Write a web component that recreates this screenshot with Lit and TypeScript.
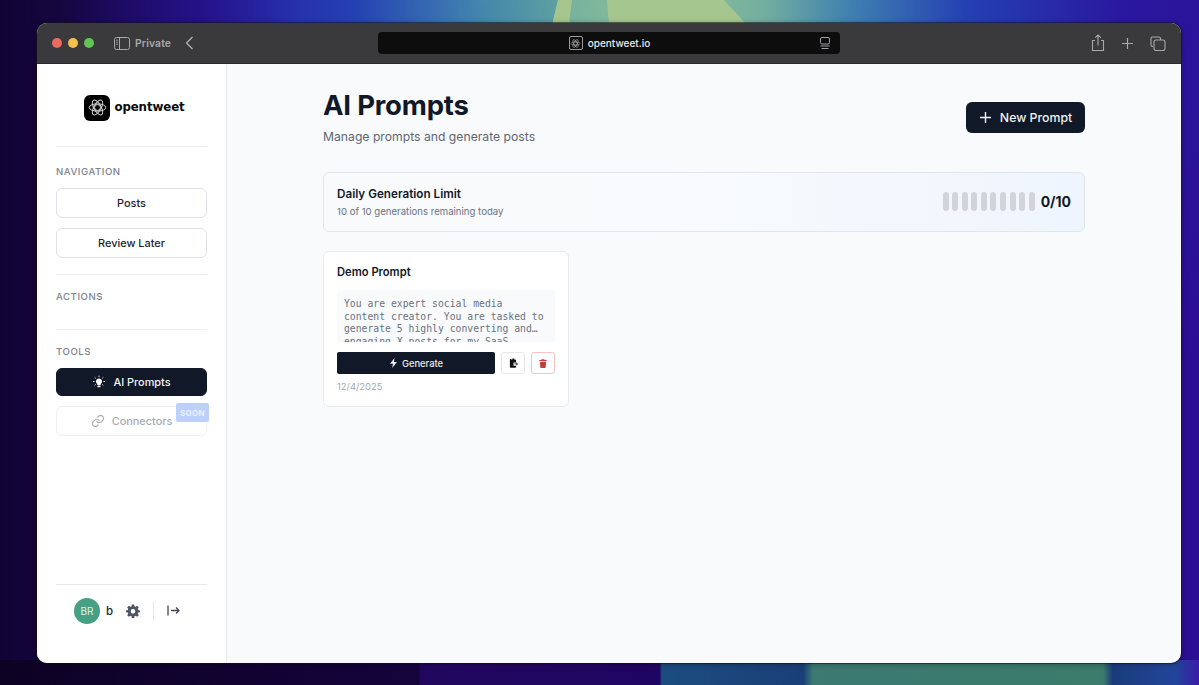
import { LitElement, html, css, svg } from "lit";
import { customElement } from "lit/decorators.js";

const atom = (stroke: string, w = 1) => svg`
  <g fill="none" stroke=${stroke} stroke-width=${w}>
    <ellipse cx="12" cy="12" rx="9.5" ry="4.2"/>
    <ellipse cx="12" cy="12" rx="9.5" ry="4.2" transform="rotate(60 12 12)"/>
    <ellipse cx="12" cy="12" rx="9.5" ry="4.2" transform="rotate(120 12 12)"/>
    <circle cx="12" cy="12" r="3.4"/>
  </g>`;

@customElement("app-root")
export class AppRoot extends LitElement {
  static styles = css`
    :host { display: block; position: relative; width: 1199px; height: 685px; overflow: hidden; background: #12032f; font-family: Inter, "Liberation Sans", sans-serif; box-sizing: border-box; padding: 23px 18px 22px 37px; }
    * { box-sizing: border-box; }
    .wall { position: absolute; inset: 0; width: 1199px; height: 685px; }
    .window { position: relative; height: 640px; border-radius: 10px; overflow: hidden; display: flex; flex-direction: column; background: #f9fafb; box-shadow: 0 0 0 1px rgba(20,20,30,.55), 0 1px 6px rgba(0,0,0,.35); }
    .titlebar { height: 41px; flex: none; background: #3a3a3d; border-bottom: 1px solid #2c2c2e; display: grid; grid-template-columns: 341px 462px 1fr; align-items: center; }
    .tl { display: flex; align-items: center; padding-left: 15px; }
    .dot { width: 10px; height: 10px; border-radius: 50%; margin-right: 6px; }
    .dot.g { margin-right: 20px; }
    .r { background: #ec6a5e; } .y { background: #f4bf4f; } .g { background: #61c554; }
    .private { color: #a7a8aa; font-size: 10.4px; font-weight: 600; margin: 0 14px 0 5px; letter-spacing: .1px; }
    .url { height: 22px; background: #0d0d0e; border-radius: 4px; display: flex; align-items: center; justify-content: center; position: relative; color: #e9e9ea; font-size: 10px; gap: 5px; font-weight: 500; padding-left: 1px; }
    .url .fav { width: 14px; height: 14px; border: 1px solid #9a9a9c; border-radius: 2px; display: flex; align-items: center; justify-content: center; }
    .url .rd { position: absolute; right: 9px; top: 5px; }
    .tools { display: flex; justify-content: flex-end; align-items: center; gap: 16px; padding-right: 15px; }
    .body { flex: 1; display: flex; min-height: 0; }
    .side { width: 190px; flex: none; background: #fff; border-right: 1px solid #e9ebee; padding: 0 19px; display: flex; flex-direction: column; }
    .logo { height: 83px; border-bottom: 1px solid #eceef1; display: flex; align-items: center; justify-content: center; gap: 4px; padding: 5px 0 0 6px; }
    .logo .mark { width: 26px; height: 26px; background: #000; border-radius: 6px; display: flex; align-items: center; justify-content: center; }
    .logo span { font-family: "DejaVu Sans", sans-serif; font-weight: 700; font-size: 11.8px; color: #0b0b0c; letter-spacing: -.1px; margin-top: -2px; }
    .sec { padding: 19px 0 16px; border-bottom: 1px solid #eceef1; display: flex; flex-direction: column; gap: 10px; }
    .sec.actions { padding: 16px 0 32px; }
    .sec.tools2 { border: 0; padding-top: 16px; }
    .label { font-size: 9.6px; line-height: 12px; font-weight: 500; letter-spacing: .55px; color: #7d828c; height: 6px; }
    .btn { height: 30px; border: 1px solid #dfe2e6; border-radius: 6px; background: #fff; color: #1d2430; font-size: 10.9px; font-weight: 500; display: flex; align-items: center; justify-content: center; gap: 7px; }
    .btn.dark { background: #111827; border-color: #111827; color: #f3f4f6; height: 28px; }
    .btn.off { color: #a9adb4; border-color: #eef0f2; position: relative; }
    .label + .btn { margin-top: 6px; }
    .soon { position: absolute; right: -3px; top: -4px; width: 33px; height: 19px; border-radius: 2px; background: #bcd0fa; color: #e9f0fe; font-size: 8px; font-weight: 700; letter-spacing: .3px; display: flex; align-items: center; justify-content: center; }
    .foot { margin-top: auto; height: 79px; border-top: 1px solid #e6e8eb; display: flex; align-items: flex-start; padding: 13px 0 0 18px; }
    .av { width: 26px; height: 26px; border-radius: 50%; background: #46a083; color: #dff1ea; font-size: 10px; display: flex; align-items: center; justify-content: center; }
    .b { font-size: 11.5px; font-weight: 500; color: #1d2430; margin-left: 6px; line-height: 26px; }
    .gear { margin: 6px 0 0 13px; }
    .vsep { width: 1px; height: 18px; background: #e3e5e8; margin: 4px 13px 0 13px; }
    .ex { margin-top: 6px; }
    .main { flex: 1; padding: 23px 96px 0; min-width: 0; }
    .head { display: flex; justify-content: space-between; align-items: flex-start; height: 85px; }
    h1 { margin: 0; font-size: 27.5px; line-height: 36px; font-weight: 700; color: #111827; letter-spacing: -.2px; }
    .head p { margin: 4px 0 0; font-size: 12.2px; line-height: 20px; color: #5f6672; }
    .new { margin-top: 15px; width: 119px; height: 31px; background: #111827; color: #f1f2f4; border-radius: 6px; font-size: 12.3px; font-weight: 500; display: flex; align-items: center; justify-content: center; gap: 8px; }
    .limit { height: 60px; border: 1px solid #e2e6ec; border-radius: 6px; background: linear-gradient(90deg, #f8fafc 0%, #f8fafd 45%, #eff5fe 100%); display: flex; align-items: center; justify-content: space-between; padding: 0 13px; }
    .limit h3 { margin: 0; font-size: 11.7px; line-height: 16px; font-weight: 600; color: #111827; }
    .limit small { display: block; margin-top: 2px; font-size: 9.6px; line-height: 15px; color: #6b7280; }
    .meter { display: flex; align-items: center; gap: 6px; padding-bottom: 2px; }
    .bars { display: flex; gap: 3.55px; }
    .bars i { display: block; width: 6px; height: 19px; border-radius: 3px; background: #d1d5db; }
    .count { font-size: 14px; font-weight: 700; color: #111827; }
    .card { margin-top: 19px; width: 246px; height: 156px; background: #fff; border: 1px solid #e8eaed; border-radius: 6px; padding: 12px 13px; }
    .card h4 { margin: 0; font-size: 11.2px; line-height: 16px; font-weight: 600; color: #111827; }
    .code { margin-top: 10px; height: 52px; overflow: hidden; background: #f9fafb; border-radius: 3px; padding: 8px 7px 0; font-family: "DejaVu Sans Mono", "Liberation Mono", monospace; font-size: 9.75px; line-height: 12.7px; color: #6b7280; white-space: pre; }
    .row { display: flex; margin-top: 10px; }
    .gen { width: 158px; height: 22px; background: #111827; border-radius: 2px; color: #eceef0; font-size: 9.4px; font-weight: 500; display: flex; align-items: center; justify-content: center; gap: 4px; }
    .ib { width: 24px; height: 22px; border: 1px solid #e5e7eb; border-radius: 3px; margin-left: 6px; display: flex; align-items: center; justify-content: center; background: #fff; }
    .ib.red { border-color: #f3c3c3; }
    .date { margin-top: 6px; font-size: 9.4px; line-height: 14px; color: #a3a8b0; }
  `;

  private wall() {
    return svg`<svg class="wall" viewBox="0 0 1199 685" preserveAspectRatio="none">
      <defs>
        <radialGradient id="a" gradientUnits="userSpaceOnUse" cx="660" cy="0" r="640">
          <stop offset="0" stop-color="#8fc09a"/><stop offset=".16" stop-color="#74b09e"/>
          <stop offset=".3" stop-color="#3f7fb0"/><stop offset=".48" stop-color="#2440b2"/>
          <stop offset=".72" stop-color="#2a18a0"/><stop offset="1" stop-color="#2c0e94"/>
        </radialGradient>
        <linearGradient id="left" x1="0" x2="1" y1="0" y2="0">
          <stop offset="0" stop-color="#0e0330" stop-opacity=".95"/><stop offset=".05" stop-color="#12042f" stop-opacity=".85"/><stop offset=".25" stop-color="#20087a" stop-opacity="0"/>
        </linearGradient>
        <linearGradient id="bot" x1="0" x2="1" y1="0" y2="0">
          <stop offset="0" stop-color="#0d0224"/><stop offset=".349" stop-color="#15033c"/><stop offset=".351" stop-color="#22075f"/><stop offset=".55" stop-color="#1f0562"/><stop offset=".552" stop-color="#1c4c80"/><stop offset=".67" stop-color="#1a3f78"/><stop offset=".678" stop-color="#3c7a72"/><stop offset=".92" stop-color="#3b7c6c"/><stop offset=".928" stop-color="#1a3c7c"/><stop offset=".98" stop-color="#22459a"/><stop offset="1" stop-color="#3a1ca8"/>
        </linearGradient>
      </defs>
      <rect width="1199" height="685" fill="url(#a)"/>
      <path d="M466 25 L489 0 L558 0 L552 25 Z" fill="#3f86a8" opacity=".4"/>
      <path d="M558 0 L572 0 L569 25 L552 25 Z" fill="#a6c68e"/>
      <path d="M607 0 L724 0 L747 25 L609 25 Z" fill="#a5c78f"/>
      <rect width="1199" height="685" fill="url(#left)"/>
      <rect y="660" width="1199" height="25" fill="url(#bot)"/>
    </svg>`;
  }

  render() {
    return html`
      ${this.wall()}
      <div class="window">
        <div class="titlebar">
          <div class="tl">
            <span class="dot r"></span><span class="dot y"></span><span class="dot g"></span>
            <svg width="16" height="13" viewBox="0 0 16 13" fill="none" stroke="#a7a8aa"><rect x=".5" y=".5" width="15" height="12" rx="2"/><path d="M5.500 .5v12"/><path d="M2.200 3.200h1.600M2.200 5.200h1.600M2.200 7.200h1.600"/></svg>
            <span class="private">Private</span>
            <svg width="9" height="14" viewBox="0 0 9 14" fill="none" stroke="#b5b6b8" stroke-width="1.2"><path d="M7.500 1 1.500 7l6 6"/></svg>
          </div>
          <div class="url">
            <span class="fav"><svg width="11" height="11" viewBox="0 0 24 24">${atom("#a0a0a2", 1.4)}</svg></span>
            <span>opentweet.io</span>
            <svg class="rd" width="12" height="13" viewBox="0 0 12 13" fill="none" stroke="#a0a0a2"><rect x="1.500" y=".5" width="9" height="6.500" rx="1.500"/><path d="M1.500 9h9M2.500 11.500h7"/></svg>
          </div>
          <div class="tools">
            <svg width="14" height="18" viewBox="0 0 14 18" fill="none" stroke="#a7a8aa" stroke-width="1.1"><path d="M4 6.500H1.500v10h11v-10H10"/><path d="M7 11.500V1M4.200 3.600 7 1l2.800 2.600"/></svg>
            <svg width="13" height="13" viewBox="0 0 13 13" fill="none" stroke="#a7a8aa" stroke-width="1.2"><path d="M6.500 1v11M1 6.500h11"/></svg>
            <svg width="16" height="15" viewBox="0 0 16 15" fill="none" stroke="#a7a8aa" stroke-width="1.1"><path d="M3 10.500H2.500A1.500 1.500 0 0 1 1 9V2.500A1.500 1.500 0 0 1 2.500 1H9a1.500 1.500 0 0 1 1.500 1.500V4"/><rect x="4" y="4" width="11" height="10.500" rx="2"/></svg>
          </div>
        </div>
        <div class="body">
          <aside class="side">
            <div class="logo">
              <div class="mark"><svg width="21" height="21" viewBox="0 0 24 24">${atom("#d8d8d8", 1.1)}</svg></div>
              <span>opentweet</span>
            </div>
            <div class="sec nav">
              <div class="label">NAVIGATION</div>
              <div class="btn">Posts</div>
              <div class="btn">Review Later</div>
            </div>
            <div class="sec actions"><div class="label">ACTIONS</div></div>
            <div class="sec tools2">
              <div class="label">TOOLS</div>
              <div class="btn dark">
                <svg width="14" height="14" viewBox="0 0 14 14" fill="#fff"><path d="M7 3.400a3 3 0 0 0-1.700 5.500V10h3.400V8.900A3 3 0 0 0 7 3.400Z"/><rect x="5.400" y="10.600" width="3.200" height="1.600" rx=".6"/><path d="M7 .6v1.500M1 6.500h1.600M11.400 6.500H13M2.700 2.300l1.100 1.100M11.300 2.300l-1.100 1.100M2.700 10.400l1-.9M11.300 10.400l-1-.9" stroke="#fff" stroke-width=".9"/></svg>
                AI Prompts
              </div>
              <div class="btn off">
                <svg width="14" height="14" viewBox="0 0 24 24" fill="none" stroke="#a9adb4" stroke-width="2" stroke-linecap="round"><path d="M10 13a5 5 0 0 0 7.500.5l3-3a5 5 0 0 0-7-7l-1.700 1.700"/><path d="M14 11a5 5 0 0 0-7.500-.5l-3 3a5 5 0 0 0 7 7l1.700-1.700"/></svg>
                Connectors
                <span class="soon">SOON</span>
              </div>
            </div>
            <div class="foot">
              <div class="av">BR</div>
              <span class="b">b</span>
              <svg class="gear" width="14" height="14" viewBox="0 0 24 24" fill="#4b5563"><path fill-rule="evenodd" d="M10 1h4l.6 3.100 1.900.8L19.100 3l2.900 2.900-1.900 2.600.8 1.900L24 11v3l-3.100.6-.8 1.900 1.900 2.600-2.900 2.900-2.600-1.900-1.900.8L14 24h-4l-.6-3.100-1.900-.8L4.900 22 2 19.100l1.900-2.600-.8-1.900L0 14v-3l3.100-.6.8-1.900L2 5.900 4.900 3l2.600 1.900 1.900-.8L10 1Zm2 7.500a4 4 0 1 0 0 8 4 4 0 0 0 0-8Z"/></svg>
              <span class="vsep"></span>
              <svg class="ex" width="13" height="13" viewBox="0 0 13 13" fill="none" stroke="#3f4652" stroke-width="1.3"><path d="M1 1.500v10M4 6.500h8M9 3.500l3 3-3 3"/></svg>
            </div>
          </aside>
          <main class="main">
            <div class="head">
              <div>
                <h1>AI Prompts</h1>
                <p>Manage prompts and generate posts</p>
              </div>
              <div class="new">
                <svg width="13" height="13" viewBox="0 0 13 13" fill="none" stroke="#f1f2f4" stroke-width="1.4"><path d="M6.500 1v11M1 6.500h11"/></svg>
                New Prompt
              </div>
            </div>
            <div class="limit">
              <div>
                <h3>Daily Generation Limit</h3>
                <small>10 of 10 generations remaining today</small>
              </div>
              <div class="meter">
                <div class="bars">${Array.from({ length: 10 }, () => html`<i></i>`)}</div>
                <span class="count">0/10</span>
              </div>
            </div>
            <div class="card">
              <h4>Demo Prompt</h4>
              <div class="code">You are expert social media
content creator. You are tasked to
generate 5 highly converting and…
engaging X posts for my SaaS</div>
              <div class="row">
                <div class="gen">
                  <svg width="9" height="10" viewBox="0 0 9 10" fill="#eceef0"><path d="M5.600 0 1 5.700h3L3.200 10 8 4.100H4.900L5.600 0Z"/></svg>
                  Generate
                </div>
                <div class="ib"><svg width="9" height="10" viewBox="0 0 10 11" fill="#111"><path d="M2.800 1.500h1V.6h2v.9h1a1 1 0 0 1 1 1V5H5v3.500h2.800V10a.8.8 0 0 1-.8.8H2a1 1 0 0 1-1-1V2.500a1 1 0 0 1 1.800-1Z"/><path d="M6 6h2.200V4.800L10 6.500 8.200 8.200V7H6Z"/></svg></div>
                <div class="ib red"><svg width="8" height="9" viewBox="0 0 9 10" fill="#c93a3a"><path d="M3 .3h3l.4.9h2.200v1.100H.4V1.200h2.200L3 .3ZM1 3h7l-.5 6.300a.7.7 0 0 1-.7.700H2.200a.7.7 0 0 1-.7-.7L1 3Z"/></svg></div>
              </div>
              <div class="date">12/4/2025</div>
            </div>
          </main>
        </div>
      </div>
    `;
  }
}
